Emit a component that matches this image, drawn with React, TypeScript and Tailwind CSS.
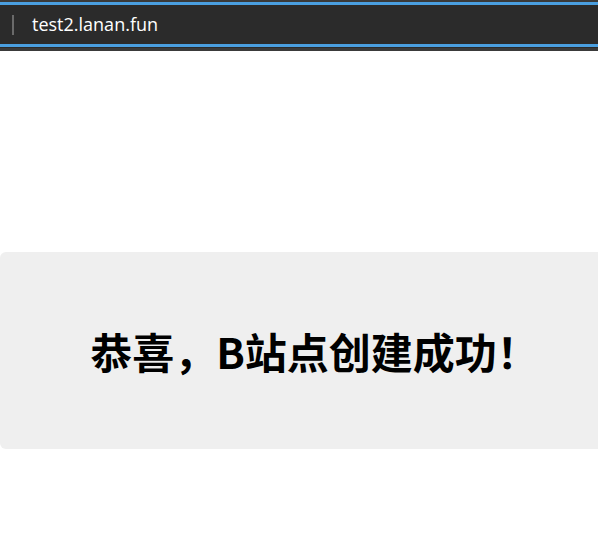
export default function App() {
  return (
    <div className="min-h-[533px] bg-white overflow-hidden">
      {/* address bar */}
      <div className="h-[51px] bg-[#3a3a3a] pt-[2px]">
        <div className="border-y-[3px] border-[#4a9fe0] bg-[#2b2b2b] h-[45px] flex items-center">
          <div className="ml-[12px] w-[2px] h-[20px] bg-[#6a6a6a]" />
          <span className="ml-[18px] text-white text-[18px] font-['Open_Sans','Noto_Sans',sans-serif] leading-none pb-[2px]">
            test2.lanan.fun
          </span>
        </div>
        <div className="h-[1px] bg-[#2b2b2b]" />
      </div>

      <div className="mt-[201px] w-[629px] h-[197px] bg-[#efefef] rounded-[6px] flex items-center justify-center">
        <h1 className="text-[42px] font-bold text-black font-['Noto_Sans_CJK_SC','Noto_Sans',sans-serif] leading-none">
          恭喜，B站点创建成功！
        </h1>
      </div>
    </div>
  )
}
